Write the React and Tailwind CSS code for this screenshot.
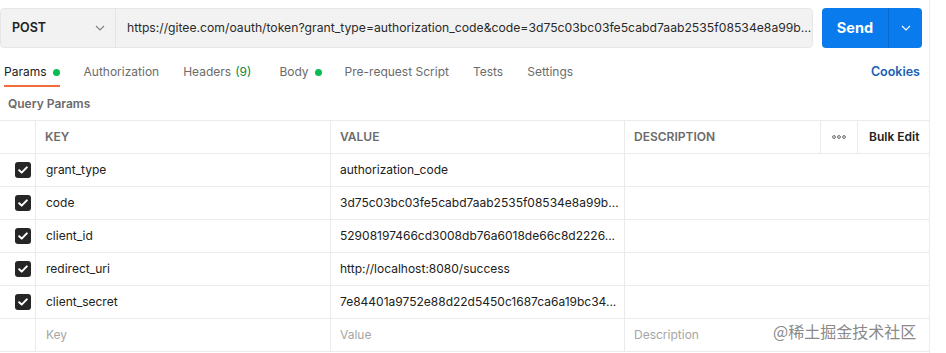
import React from "react";

const rows = [
  ["grant_type", "authorization_code"],
  ["code", "3d75c03bc03fe5cabd7aab2535f08534e8a99b..."],
  ["client_id", "52908197466cd3008db76a6018de66c8d2226..."],
  ["redirect_uri", "http://localhost:8080/success"],
  ["client_secret", "7e84401a9752e88d22d5450c1687ca6a19bc34..."],
];

function Chevron({ className }) {
  return (
    <svg className={className} width="10" height="6" viewBox="0 0 10 6" fill="none">
      <path d="M1 1l4 4 4-4" stroke="currentColor" strokeWidth="1.1" />
    </svg>
  );
}

function Check() {
  return (
    <div className="w-[16px] h-[16px] rounded-[3px] bg-[#262626] flex items-center justify-center">
      <svg width="10" height="8" viewBox="0 0 10 8" fill="none">
        <path d="M1.2 4.2l2.5 2.4L8.8 1.4" stroke="white" strokeWidth="2" strokeLinecap="round" strokeLinejoin="round" />
      </svg>
    </div>
  );
}

export default function App() {
  return (
    <div
      className="w-[946px] h-[353px] bg-white relative overflow-hidden text-[12px] text-[#212121]"
      style={{ fontFamily: "Inter, 'Noto Sans', sans-serif" }}
    >
      <div className="w-[930px] h-full border-r border-[#ededed]">
        {/* top bar */}
        <div className="flex pt-[8px] h-[48px]">
          <div className="flex w-[813px] h-[40px] bg-[#f2f2f2] rounded-[4px] border border-[#e6e6e6]">
            <div className="w-[115px] flex items-center justify-between pl-[11px] pr-[10px] border-r border-[#e3e3e3]">
              <span className="font-semibold text-[12.5px] text-[#212121]">POST</span>
              <Chevron className="text-[#808080]" />
            </div>
            <div className="flex-1 min-w-0 flex items-center pl-[11px] pr-[8px] text-[12.2px] text-[#2a2a2a]">
              <span className="whitespace-nowrap">
                https://gitee.com/oauth/token?grant_type=authorization_code&amp;code=3d75c03bc03fe5cabd7aab2535f08534e8a99b...
              </span>
            </div>
          </div>
          <div className="ml-[9px] w-[100px] h-[40px] rounded-[4px] bg-[#097bed] flex">
            <div className="w-[67px] flex items-center justify-center text-white font-bold text-[14.5px] border-r border-[#0868c9]">
              Send
            </div>
            <div className="flex-1 flex items-center justify-center text-white">
              <Chevron className="text-white" />
            </div>
          </div>
        </div>

        {/* tabs */}
        <div className="flex items-end h-[40px] text-[12px] text-[#6b6b6b]">
          <div className="relative pl-[4px] h-[32px] flex items-center gap-[6px] text-[#212121]">
            <span>Params</span>
            <span className="w-[7px] h-[7px] rounded-full bg-[#0cbb52]" />
            <div className="absolute left-[4px] right-[0px] bottom-[1px] h-[2px] bg-[#f26b3a]" />
          </div>
          <div className="h-[32px] flex items-center ml-[24px]">Authorization</div>
          <div className="h-[32px] flex items-center ml-[24px]">Headers <span className="ml-[4px] text-[#0a8a3c]">(9)</span></div>
          <div className="h-[32px] flex items-center gap-[6px] ml-[28px]">
            <span>Body</span>
            <span className="w-[7px] h-[7px] rounded-full bg-[#0cbb52]" />
          </div>
          <div className="h-[32px] flex items-center ml-[23px]">Pre-request Script</div>
          <div className="h-[32px] flex items-center ml-[24px]">Tests</div>
          <div className="h-[32px] flex items-center ml-[24px]">Settings</div>
          <div className="h-[32px] flex items-center ml-auto pr-[9px] text-[12.5px] text-[#1a5fb4] font-semibold">Cookies</div>
        </div>

        {/* query params label */}
        <div className="h-[32px] flex items-center pl-[8px] font-semibold text-[12px] text-[#6b6b6b]">Query Params</div>

        {/* table */}
        <div className="border-t border-[#ebebeb]">
          <div className="flex h-[33px] border-b border-[#ebebeb] text-[12px] font-semibold text-[#6b6b6b]">
            <div className="w-[36px] border-r border-[#ebebeb]" />
            <div className="w-[295px] border-r border-[#ebebeb] flex items-center pl-[9px]">KEY</div>
            <div className="w-[294px] border-r border-[#ebebeb] flex items-center pl-[9px]">VALUE</div>
            <div className="w-[196px] border-r border-[#ebebeb] flex items-center pl-[9px]">DESCRIPTION</div>
            <div className="w-[37px] border-r border-[#ebebeb] flex items-center justify-center">
              <svg width="14" height="4" viewBox="0 0 14 4"><circle cx="2" cy="2" r="1.4" fill="none" stroke="#555" strokeWidth="0.9" /><circle cx="7" cy="2" r="1.4" fill="none" stroke="#555" strokeWidth="0.9" /><circle cx="12" cy="2" r="1.4" fill="none" stroke="#555" strokeWidth="0.9" /></svg>
            </div>
            <div className="flex-1 flex items-center pl-[11px] text-[#212121]">Bulk Edit</div>
          </div>
          {rows.map(([k, v]) => (
            <div key={k} className="flex h-[33px] border-b border-[#ebebeb] text-[12px] text-[#212121]">
              <div className="w-[36px] border-r border-[#ebebeb] flex items-center pl-[15px]">
                <Check />
              </div>
              <div className="w-[295px] border-r border-[#ebebeb] flex items-center pl-[10px]">{k}</div>
              <div className="w-[294px] border-r border-[#ebebeb] flex items-center pl-[9px] whitespace-nowrap">{v}</div>
              <div className="w-[196px]" />
            </div>
          ))}
          <div className="flex h-[33px] border-b border-[#ebebeb] text-[12px] text-[#a6a6a6]">
            <div className="w-[36px] border-r border-[#ebebeb]" />
            <div className="w-[295px] border-r border-[#ebebeb] flex items-center pl-[10px]">Key</div>
            <div className="w-[294px] border-r border-[#ebebeb] flex items-center pl-[9px]">Value</div>
            <div className="flex-1 flex items-center pl-[9px]">Description</div>
          </div>
        </div>
      </div>

      <div
        className="absolute left-[773px] top-[319px] text-[16px] text-[#8a8a8a] whitespace-nowrap"
        style={{ fontFamily: "'Noto Sans CJK SC', sans-serif", textShadow: "0 0 1px #fff" }}
      >
        @稀土掘金技术社区
      </div>
    </div>
  );
}
